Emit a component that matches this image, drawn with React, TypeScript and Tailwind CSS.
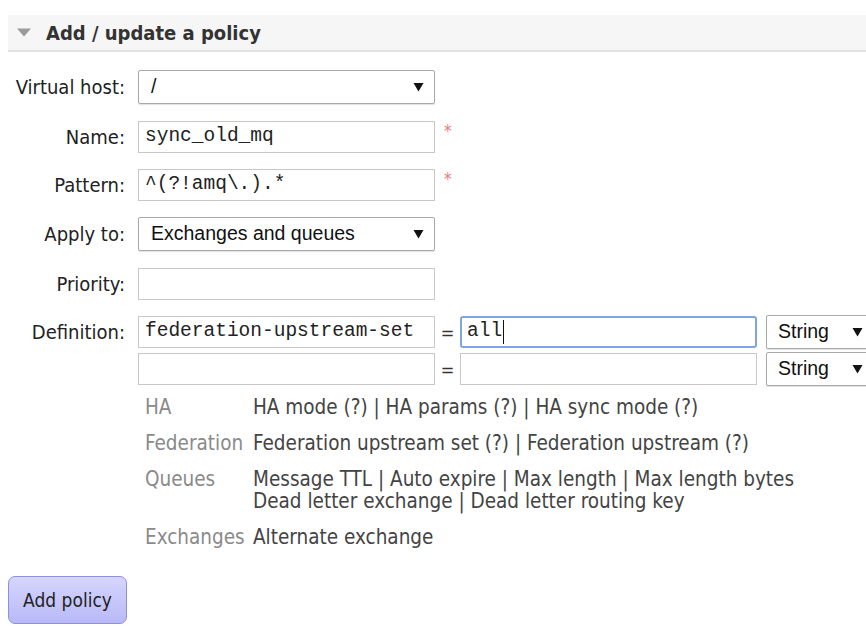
import React from 'react'

const sans = "font-['DejaVu_Sans_Condensed','DejaVu_Sans',sans-serif]"
const mono = "font-['Liberation_Mono','DejaVu_Sans_Mono',monospace]"
const arial = "font-['Liberation_Sans',Arial,sans-serif]"

function Arrow() {
  return (
    <svg width="11" height="10" viewBox="0 0 11 10" className="shrink-0">
      <path d="M0.5 1 L10.5 1 L5.5 9.5 Z" fill="#111" />
    </svg>
  )
}

function Select({ value, width = 'w-[297px]', pad = 'pl-[12px] pr-[10px]' }: { value: string; width?: string; pad?: string }) {
  return (
    <div className={`flex h-[34px] ${width} shrink-0 items-center justify-between rounded-[2px] border border-[#a9a9a9] bg-white ${pad} shadow-[0_1px_1px_rgba(0,0,0,0.12)] ${arial} text-[19.5px] text-[#111]`}>
      <span>{value}</span>
      <Arrow />
    </div>
  )
}

function TextInput({ value, focused, cursor, width = 'w-[297px]' }: { value?: string; focused?: boolean; cursor?: boolean; width?: string }) {
  return (
    <div className={`flex h-[32px] ${width} shrink-0 items-center bg-white pl-[6px] ${mono} text-[19.5px] text-[#222] ${focused ? 'rounded-[3px] border-2 border-[#7fa4e6]' : 'border border-[#c8c8c8]'}`}>
      <span className={focused ? '-ml-px' : ''}>{value}</span>
      {cursor && <span className="ml-px h-[24px] w-px bg-[#111]" />}
    </div>
  )
}

function Label({ children }: { children: React.ReactNode }) {
  return <div className="mr-[13px] w-[117px] shrink-0 text-right text-[20px] text-[#222]">{children}</div>
}

function Required() {
  return <span className="ml-[9px] self-start pt-[2px] text-[17px] leading-none text-[#ee7777]">*</span>
}

const helpRows: Array<{ group: string; lines: Array<string> }> = [
  { group: 'HA', lines: ['HA mode (?) | HA params (?) | HA sync mode (?)'] },
  { group: 'Federation', lines: ['Federation upstream set (?) | Federation upstream (?)'] },
  { group: 'Queues', lines: ['Message TTL | Auto expire | Max length | Max length bytes', 'Dead letter exchange | Dead letter routing key'] },
  { group: 'Exchanges', lines: ['Alternate exchange'] },
]

export default function App() {
  return (
    <div className={`min-h-screen w-full overflow-hidden bg-white ${sans}`}>
      <div className="pl-2 pt-[15px]">
        <div className="flex h-[37px] items-center border-b-2 border-[#e2e2e2] bg-[#f6f6f6] pl-[9px]">
          <svg width="14" height="9" viewBox="0 0 14 9">
            <path d="M0 0.5 L14 0.5 L7 8.5 Z" fill="#9a9a9a" />
          </svg>
          <h2 className="ml-[15px] text-[20px] font-bold text-[#333]">Add / update a policy</h2>
        </div>

        <div className="flex flex-col">
          <div className="mt-[18px] flex items-center">
            <Label>Virtual host:</Label>
            <Select value="/" />
          </div>
          <div className="mt-[17px] flex items-center">
            <Label>Name:</Label>
            <TextInput value="sync_old_mq" />
            <Required />
          </div>
          <div className="mt-[16px] flex items-center">
            <Label>Pattern:</Label>
            <TextInput value="^(?!amq\.).*" />
            <Required />
          </div>
          <div className="mt-[16px] flex items-center">
            <Label>Apply to:</Label>
            <Select value="Exchanges and queues" />
          </div>
          <div className="mt-[17px] flex items-center">
            <Label>Priority:</Label>
            <TextInput />
          </div>
          <div className="mt-[15px] flex items-center">
            <Label>Definition:</Label>
            <TextInput value="federation-upstream-set" />
            <span className="w-[25px] shrink-0 text-center text-[18px] text-[#333]">=</span>
            <TextInput value="all" focused cursor />
            <div className="ml-[9px]">
              <Select value="String" width="w-[110px]" pad="pl-[11px] pr-[12px]" />
            </div>
          </div>
          <div className="mt-[3px] flex items-center">
            <div className="w-[130px] shrink-0" />
            <TextInput />
            <span className="w-[25px] shrink-0 text-center text-[18px] text-[#333]">=</span>
            <TextInput />
            <div className="ml-[9px]">
              <Select value="String" width="w-[110px]" pad="pl-[11px] pr-[12px]" />
            </div>
          </div>

          <div className="ml-[137px] mt-[3px] flex flex-col text-[20.5px] leading-[22px]">
            {helpRows.map((row) => (
              <div key={row.group} className="flex py-[7px]">
                <div className="w-[108px] shrink-0 text-[#8a8a8a]">{row.group}</div>
                <div className="flex flex-col text-[#444]">
                  {row.lines.map((line) => <span key={line}>{line}</span>)}
                </div>
              </div>
            ))}
          </div>

          <div className="mt-[21px]">
            <button type="button" className="h-[48px] w-[119px] rounded-[7px] border border-[#8f8fe0] bg-gradient-to-b from-[#d6d6ff] to-[#b9b9f7] text-[19px] text-[#222]">Add policy</button>
          </div>
        </div>
      </div>
    </div>
  )
}
